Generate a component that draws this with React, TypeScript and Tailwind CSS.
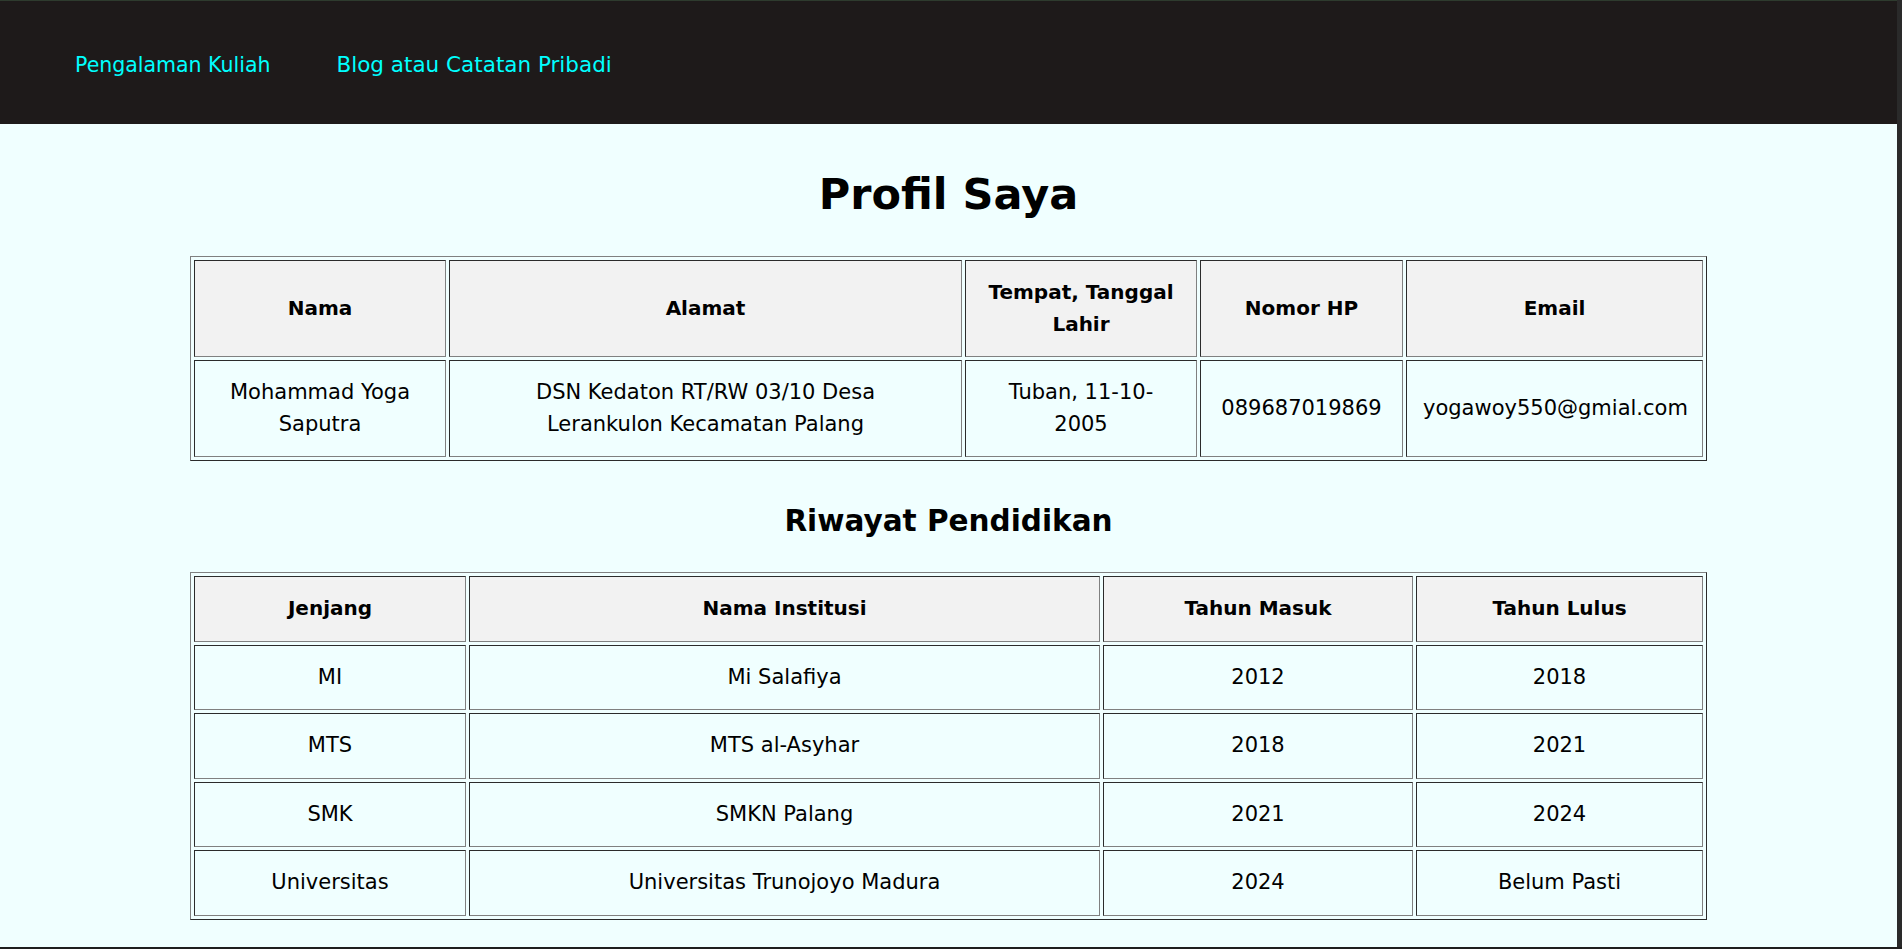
const profil = {
  nama: 'Mohammad Yoga Saputra',
  hp: '089687019869',
  email: 'yogawoy550@gmial.com',
};

const pendidikan = [
  { jenjang: 'MI', institusi: 'Mi Salafiya', masuk: '2012', lulus: '2018' },
  { jenjang: 'MTS', institusi: 'MTS al-Asyhar', masuk: '2018', lulus: '2021' },
  { jenjang: 'SMK', institusi: 'SMKN Palang', masuk: '2021', lulus: '2024' },
  { jenjang: 'Universitas', institusi: 'Universitas Trunojoyo Madura', masuk: '2024', lulus: 'Belum Pasti' },
];

// classic border="1" look: outset table, inset cells
const tableCls =
  'w-[1517px] mx-auto table-fixed border-separate border-spacing-[3px] border border-t-[#808080] border-l-[#808080] border-r-[#2b2b2b] border-b-[#2b2b2b]';
const cellBorder = 'border border-t-[#2b2b2b] border-l-[#2b2b2b] border-r-[#808080] border-b-[#808080]';
const thCls = `${cellBorder} bg-[#f2f2f2] px-4 font-bold text-[20px] leading-[31.5px] text-center align-middle`;
const tdCls = `${cellBorder} px-4 text-[21px] leading-[31.5px] text-center align-middle`;

export default function App() {
  return (
    <div className="h-[949px] flex flex-col overflow-hidden font-['DejaVu_Sans',sans-serif] text-black">
      <div className="flex flex-1 min-h-0">
        <div className="flex-1 flex flex-col bg-[#f0ffff]">
          <div className="h-px bg-[#2e3b2e]" />
          <nav className="h-[123px] bg-[#1e1a1a] flex items-center pl-[75px] pt-[6px] gap-[66px]">
            <a className="text-[#00ffff] text-[20.5px]">Pengalaman Kuliah</a>
            <a className="text-[#00ffff] text-[21.5px]">Blog atau Catatan Pribadi</a>
          </nav>

          <main>
            <h1 className="mt-[40px] text-center font-bold text-[43px] leading-[60px]">Profil Saya</h1>

            <table className={`mt-[32px] ${tableCls}`}>
              <thead>
                <tr>
                  <th className={`${thCls} w-[252px] py-4`}>Nama</th>
                  <th className={`${thCls} w-[513px] py-4`}>Alamat</th>
                  <th className={`${thCls} w-[232px] py-4`}>Tempat, Tanggal Lahir</th>
                  <th className={`${thCls} w-[203px] py-4`}>Nomor HP</th>
                  <th className={`${thCls} w-[297px] py-4`}>Email</th>
                </tr>
              </thead>
              <tbody>
                <tr>
                  <td className={`${tdCls} py-4`}>{profil.nama}</td>
                  <td className={`${tdCls} py-4`}>
                    DSN Kedaton RT/RW 03/10 Desa
                    <br />
                    Lerankulon Kecamatan Palang
                  </td>
                  <td className={`${tdCls} py-4`}>
                    Tuban, 11-10-
                    <br />
                    2005
                  </td>
                  <td className={`${tdCls} py-4`}>{profil.hp}</td>
                  <td className={`${tdCls} py-4`}>{profil.email}</td>
                </tr>
              </tbody>
            </table>

            <h2 className="mt-[40px] text-center font-bold text-[29.5px] leading-[40px]">Riwayat Pendidikan</h2>

            <table className={`mt-[31px] ${tableCls}`}>
              <thead>
                <tr>
                  <th className={`${thCls} w-[272px] py-4`}>Jenjang</th>
                  <th className={`${thCls} w-[631px] py-4`}>Nama Institusi</th>
                  <th className={`${thCls} w-[310px] py-4`}>Tahun Masuk</th>
                  <th className={`${thCls} w-[287px] py-4`}>Tahun Lulus</th>
                </tr>
              </thead>
              <tbody>
                {pendidikan.map((row) => (
                  <tr key={row.jenjang}>
                    <td className={`${tdCls} py-4`}>{row.jenjang}</td>
                    <td className={`${tdCls} py-4`}>{row.institusi}</td>
                    <td className={`${tdCls} py-4`}>{row.masuk}</td>
                    <td className={`${tdCls} py-4`}>{row.lulus}</td>
                  </tr>
                ))}
              </tbody>
            </table>
          </main>
        </div>
        <div className="w-[5px] bg-[#2a2a2a]" />
      </div>
      <div className="h-[2px] bg-[#1e1e1e]" />
    </div>
  );
}
